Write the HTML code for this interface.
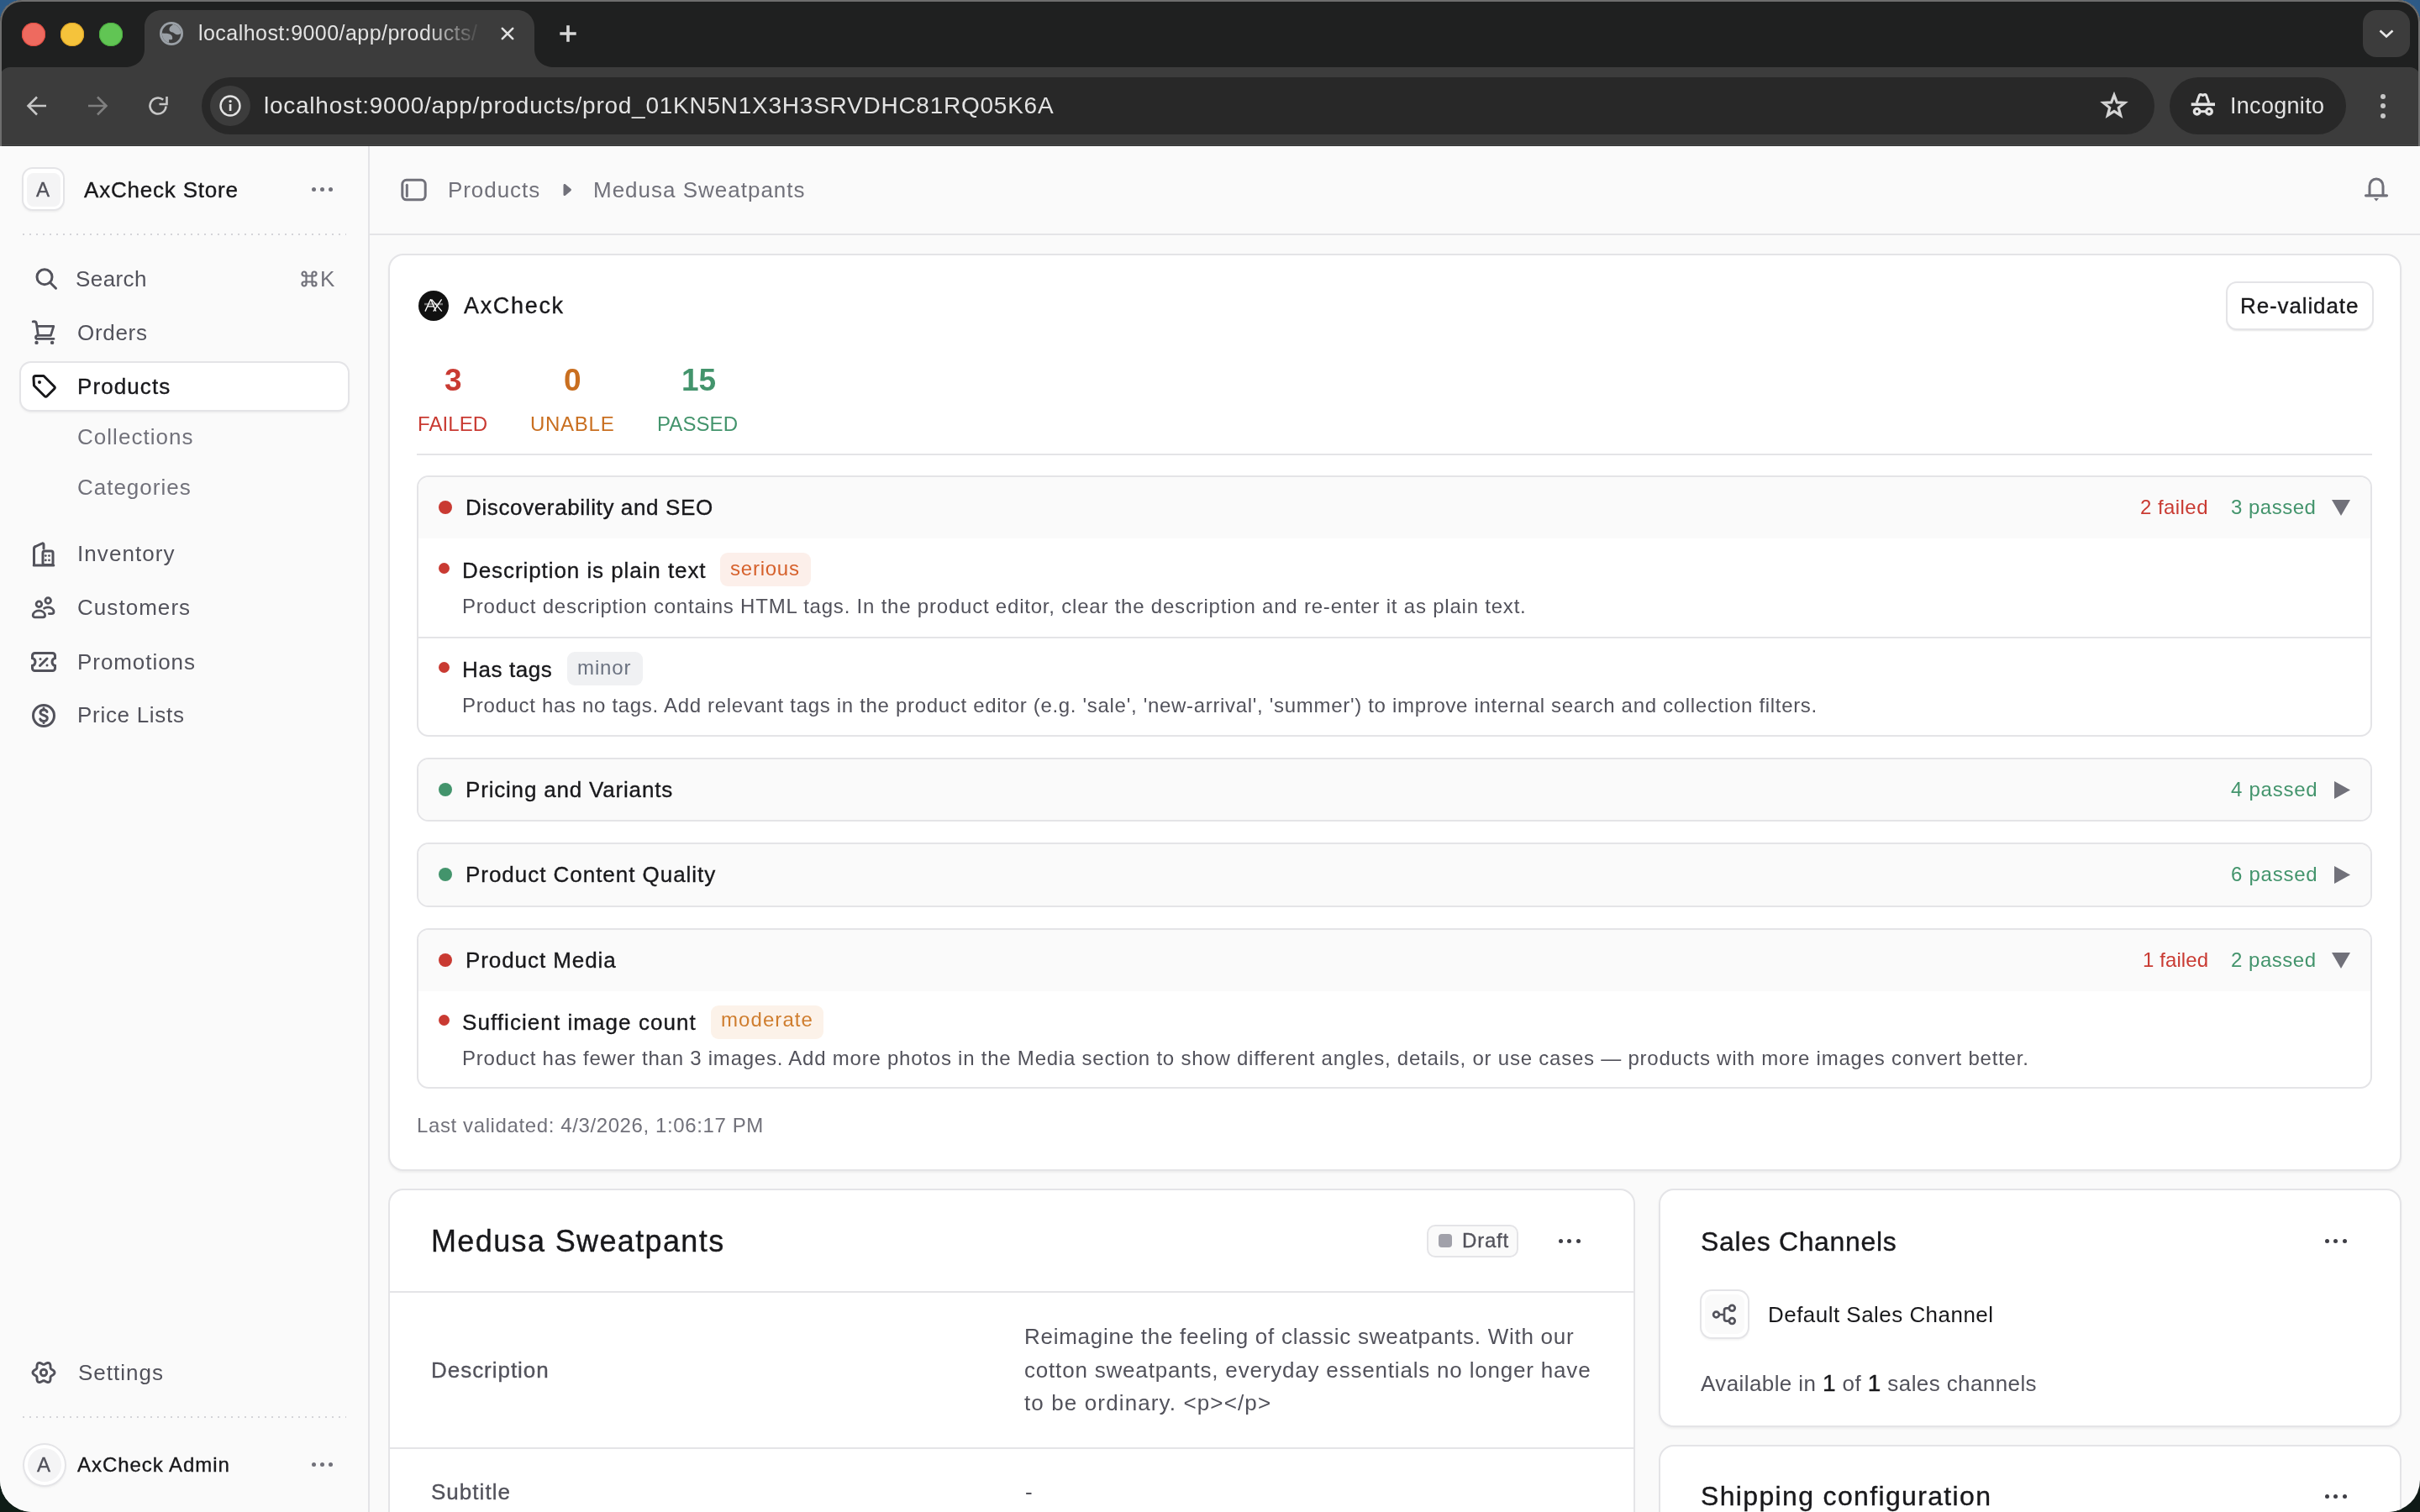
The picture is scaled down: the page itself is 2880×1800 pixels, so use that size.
<!DOCTYPE html><html><head><meta charset="utf-8"><style>
html,body{margin:0;padding:0;width:2880px;height:1800px;overflow:hidden;background:#10201a;}
body{position:relative;font-family:"Liberation Sans",sans-serif;}
.t{position:absolute;white-space:pre;line-height:1;will-change:transform;}
svg{overflow:visible;position:absolute}
</style></head><body>
<div style="position:absolute;left:0px;top:0px;width:80px;height:80px;background:#2d5a86;"></div>
<div style="position:absolute;left:2800px;top:0px;width:80px;height:80px;background:#2d5a86;"></div>
<div style="position:absolute;left:0px;top:1720px;width:80px;height:80px;background:#0f1d17;"></div>
<div style="position:absolute;left:2800px;top:1720px;width:80px;height:80px;background:#0f1a16;"></div>
<div style="position:absolute;left:0;top:0;width:2880px;height:1800px;border-radius:26px 26px 38px 38px;overflow:hidden;background:#fafafa;">
<div style="position:absolute;left:0px;top:0px;width:2880px;height:174px;background:#1f2020;"></div>
<div style="position:absolute;left:0px;top:80px;width:2880px;height:94px;background:#3c3c3c;border-radius:12px 12px 0 0;"></div>
<div style="position:absolute;left:0px;top:0px;width:2px;height:174px;background:#4a4a4a;"></div>
<div style="position:absolute;left:0px;top:90px;width:2px;height:84px;background:#686868;"></div>
<div style="position:absolute;left:2878px;top:0px;width:2px;height:174px;background:#4a4a4a;"></div>
<div style="position:absolute;left:2878px;top:90px;width:2px;height:84px;background:#686868;"></div>
<div style="position:absolute;left:0px;top:172px;width:2880px;height:1px;background:#464646;"></div>
<div style="position:absolute;left:0px;top:173px;width:2880px;height:1px;background:#333434;"></div>
<div style="position:absolute;left:0;top:0;width:2876px;height:172px;border:2px solid #6e6e6e;border-bottom:none;border-radius:26px 26px 0 0;"></div>
<svg style="position:absolute;left:148px;top:12px;" width="512" height="68" viewBox="0 0 512 68"><path d="M0 68 C14 68 24 60 24 46 L24 20 C24 9 33 0 44 0 L468 0 C479 0 488 9 488 20 L488 46 C488 60 498 68 512 68 Z" fill="#3c3c3c"/></svg>
<div style="position:absolute;left:26px;top:27px;width:28px;height:28px;border-radius:50%;background:#ee6a5f;box-shadow:inset 0 0 0 1px #e24b41;"></div>
<div style="position:absolute;left:72px;top:27px;width:28px;height:28px;border-radius:50%;background:#f5c33b;box-shadow:inset 0 0 0 1px #dea425;"></div>
<div style="position:absolute;left:118px;top:27px;width:28px;height:28px;border-radius:50%;background:#61c554;box-shadow:inset 0 0 0 1px #4cae40;"></div>
<svg style="position:absolute;left:190px;top:26px;" width="28" height="28" viewBox="0 0 28 28"><defs><clipPath id="gc"><circle cx="14" cy="14" r="11.2"/></clipPath></defs><circle cx="14" cy="14" r="14" fill="#9aa0a6"/><circle cx="14" cy="14" r="11.2" fill="#3c3c3c"/><g clip-path="url(#gc)" fill="#9aa0a6"><path d="M15.7 0 L15.7 3.4 C13 5 11.4 6.5 11.4 9 C11.4 11.5 13.5 12.3 15.7 12.6 C17.5 13.5 18 15 20.5 15.2 C22.5 15.2 24 14.5 25 13.9 L30 13.9 L30 0 Z"/><path d="M0 13.6 L3.1 13.6 C7 13.8 10.5 13.9 12.5 14.8 C14.5 15.8 15.2 17.5 15.2 19.5 C15.2 21 14.5 21.2 13 21.2 L11 21.2 L11.2 24.1 L11.2 30 L0 30 Z"/></g></svg>
<div style="position:absolute;left:230px;top:20px;width:345px;height:40px;overflow:hidden;-webkit-mask-image:linear-gradient(90deg,#000 80%,transparent 100%);"><div style="position:absolute;left:-230px;top:-20px;width:2880px;height:100px;">
<div class="t" style="left:236.00px;top:26.84px;font-size:25px;color:#e3e3e3;letter-spacing:0.454px;">localhost:9000/app/products/</div>
</div></div>
<svg style="position:absolute;left:596px;top:32px;" width="16" height="16" viewBox="0 0 16 16"><path d="M1.8 1.8 L14.2 14.2 M14.2 1.8 L1.8 14.2" stroke="#e3e3e3" stroke-width="2.6" stroke-linecap="round"/></svg>
<svg style="position:absolute;left:666px;top:30px;" width="20" height="20" viewBox="0 0 20 20"><path d="M10 0.3 V19.7 M0.3 10 H19.7" stroke="#d8d8d8" stroke-width="3.6"/></svg>
<div style="position:absolute;left:2812px;top:12px;width:56px;height:56px;border-radius:16px;background:#3c3c3c;"></div>
<svg style="position:absolute;left:2831px;top:35px;" width="18" height="10" viewBox="0 0 18 10"><path d="M1.5 1.5 L9 8.5 L16.5 1.5" stroke="#e8e8e8" stroke-width="2.6" fill="none"/></svg>
<svg style="position:absolute;left:32px;top:114px;" width="24" height="24" viewBox="0 0 24 24"><path d="M23 12 H2.5 M12 1.5 L1.5 12 L12 22.5" stroke="#c7c7c7" stroke-width="2.6" fill="none"/></svg>
<svg style="position:absolute;left:104px;top:114px;" width="24" height="24" viewBox="0 0 24 24"><path d="M1 12 H21.5 M12 1.5 L22.5 12 L12 22.5" stroke="#7f7f7f" stroke-width="2.6" fill="none"/></svg>
<svg style="position:absolute;left:176px;top:114px;" width="24" height="24" viewBox="0 0 24 24"><path d="M21.5 12.5 A9.5 9.5 0 1 1 18.2 4.8" stroke="#c7c7c7" stroke-width="2.6" fill="none"/><path d="M22.5 1 V10 H13.5" stroke="#c7c7c7" stroke-width="2.6" fill="none"/></svg>
<div style="position:absolute;left:240px;top:92px;width:2324px;height:68px;border-radius:34px;background:#282828;"></div>
<div style="position:absolute;left:250px;top:102px;width:48px;height:48px;border-radius:50%;background:#3c3c3c;"></div>
<svg style="position:absolute;left:261px;top:113px;" width="26" height="26" viewBox="0 0 26 26"><circle cx="13" cy="13" r="11.5" stroke="#e3e3e3" stroke-width="2.4" fill="none"/><rect x="11.8" y="11" width="2.6" height="8" fill="#e3e3e3"/><circle cx="13.1" cy="7.6" r="1.7" fill="#e3e3e3"/></svg>
<div class="t" style="left:314.00px;top:112.30px;font-size:28px;color:#e3e3e3;letter-spacing:0.751px;">localhost:9000/app/products/prod_01KN5N1X3H3SRVDHC81RQ05K6A</div>
<svg style="position:absolute;left:2500px;top:110px;" width="32" height="31" viewBox="0 0 32 31"><path d="M16 3.2 L19.3 11.9 L28.6 12.4 L21.3 18.3 L23.7 27.4 L16 22.3 L8.3 27.4 L10.7 18.3 L3.4 12.4 L12.7 11.9 Z" stroke="#d4d4d4" stroke-width="3.2" fill="none" stroke-linejoin="miter"/></svg>
<div style="position:absolute;left:2582px;top:92px;width:210px;height:68px;border-radius:34px;background:#282828;"></div>
<svg style="position:absolute;left:2607px;top:111px;" width="29" height="28" viewBox="0 0 29 28"><path d="M7.2 11.5 L10.3 2.8 C10.7 1.7 11.6 1.3 12.6 1.7 L14.5 2.5 L16.4 1.7 C17.4 1.3 18.3 1.7 18.7 2.8 L21.8 11.5" stroke="#e3e3e3" stroke-width="3" fill="none" stroke-linejoin="round"/><rect x="0.7" y="11.4" width="28.3" height="3.7" fill="#e3e3e3"/><circle cx="7.6" cy="21.7" r="3.3" stroke="#e3e3e3" stroke-width="3.3" fill="none"/><circle cx="22" cy="21.7" r="3.3" stroke="#e3e3e3" stroke-width="3.3" fill="none"/><path d="M10.5 21.7 H19" stroke="#e3e3e3" stroke-width="3"/></svg>
<div class="t" style="left:2654.00px;top:113.14px;font-size:27px;color:#e3e3e3;letter-spacing:0.297px;">Incognito</div>
<div style="position:absolute;left:2833px;top:111.5px;width:6px;height:6px;border-radius:50%;background:#c7c7c7;"></div>
<div style="position:absolute;left:2833px;top:123px;width:6px;height:6px;border-radius:50%;background:#c7c7c7;"></div>
<div style="position:absolute;left:2833px;top:134.5px;width:6px;height:6px;border-radius:50%;background:#c7c7c7;"></div>
<div style="position:absolute;left:0px;top:174px;width:438px;height:1626px;background:#fafafa;"></div>
<div style="position:absolute;left:438px;top:174px;width:2px;height:1626px;background:#e4e4e7;"></div>
<div style="position:absolute;left:28px;top:201px;width:47px;height:48px;border-radius:11px;background:#fff;box-shadow:0 0 0 2px #e4e4e7,0 2px 3px 1px rgba(0,0,0,0.07);"></div>
<div style="position:absolute;left:32px;top:206px;width:40px;height:40px;border-radius:8px;background:#f4f4f5;"></div>
<div class="t" style="left:43.20px;top:213.88px;font-size:24px;color:#52525b;-webkit-text-stroke:0.35px currentColor;">A</div>
<div class="t" style="left:100.00px;top:212.99px;font-size:26px;color:#18181b;letter-spacing:0.798px;-webkit-text-stroke:0.35px currentColor;">AxCheck Store</div>
<div style="position:absolute;left:370.5px;top:223px;width:5px;height:5px;border-radius:50%;background:#71717a;"></div>
<div style="position:absolute;left:380.5px;top:223px;width:5px;height:5px;border-radius:50%;background:#71717a;"></div>
<div style="position:absolute;left:390.5px;top:223px;width:5px;height:5px;border-radius:50%;background:#71717a;"></div>
<div style="position:absolute;left:24px;top:278px;width:388px;height:2px;background-image:radial-gradient(circle,#d4d4d8 0.9px,transparent 1.1px);background-size:8px 2px;"></div>
<svg style="position:absolute;left:40px;top:317px;" width="30" height="30" viewBox="0 0 30 30"><circle cx="13" cy="12.7" r="9" stroke="#52525b" stroke-width="3" fill="none"/><path d="M20 19.7 L26.5 26.2" stroke="#52525b" stroke-width="3" stroke-linecap="round"/></svg>
<div class="t" style="left:90.20px;top:318.99px;font-size:26px;color:#52525b;letter-spacing:0.416px;">Search</div>
<svg style="position:absolute;left:358px;top:322px;" width="20" height="20" viewBox="0 0 20 20"><path d="M6.5 6.5 H13.5 V13.5 H6.5 Z M6.5 6.5 V4 A2.5 2.5 0 1 0 4 6.5 H6.5 M13.5 6.5 V4 A2.5 2.5 0 1 1 16 6.5 H13.5 M6.5 13.5 V16 A2.5 2.5 0 1 1 4 13.5 H6.5 M13.5 13.5 V16 A2.5 2.5 0 1 0 16 13.5 H13.5" stroke="#71717a" stroke-width="2.2" fill="none"/></svg>
<div class="t" style="left:381.00px;top:318.99px;font-size:26px;color:#71717a;">K</div>
<svg style="position:absolute;left:37px;top:380px;" width="30" height="30" viewBox="0 0 30 30"><path d="M2.2 2.9 C4.5 2.5 6 3.2 6.4 5 L8.4 19.3 H23.4 L26.8 8.4 H7.4 M8.4 19.3 C6.5 19.3 5.5 20.3 5.5 21.4 C5.5 22.7 6.5 23.4 7.8 23.4 H27" stroke="#52525b" stroke-width="2.8" fill="none" stroke-linecap="round" stroke-linejoin="round"/><circle cx="6.5" cy="27.9" r="2.2" fill="#52525b"/><circle cx="25.1" cy="27.9" r="2.2" fill="#52525b"/></svg>
<div class="t" style="left:91.80px;top:382.99px;font-size:26px;color:#52525b;letter-spacing:0.694px;">Orders</div>
<div style="position:absolute;left:25px;top:432px;width:389px;height:56px;border-radius:12px;background:#fff;box-shadow:0 0 0 2px #e4e4e7,0 2px 3px 1px rgba(0,0,0,0.07);"></div>
<svg style="position:absolute;left:37px;top:445px;" width="30" height="30" viewBox="0 0 30 30"><path d="M3 5 C3 3.5 4 2.5 5.5 2.5 H15 L27.5 15 C28.5 16 28.5 17 27.5 18 L19 26.5 C18 27.5 17 27.5 16 26.5 L3.5 14 Z" stroke="#18181b" stroke-width="3" fill="none" stroke-linejoin="round"/><circle cx="10" cy="10" r="2" fill="#18181b"/></svg>
<div class="t" style="left:91.80px;top:446.99px;font-size:26px;color:#18181b;letter-spacing:1.090px;-webkit-text-stroke:0.35px currentColor;">Products</div>
<div class="t" style="left:91.80px;top:506.99px;font-size:26px;color:#71717a;letter-spacing:1.036px;">Collections</div>
<div class="t" style="left:91.80px;top:566.99px;font-size:26px;color:#71717a;letter-spacing:0.988px;">Categories</div>
<svg style="position:absolute;left:37px;top:644px;" width="30" height="31" viewBox="0 0 30 31"><path d="M3.5 28.5 V9 C3.5 7.5 4 7 5.5 6.5 L13 3 C14 2.5 15 3 15 4.5 V9" stroke="#52525b" stroke-width="3" fill="none" stroke-linejoin="round" stroke-linecap="round"/><rect x="14" y="12" width="12" height="16.5" rx="2" stroke="#52525b" stroke-width="3" fill="none"/><path d="M3.2 29 H26.8" stroke="#52525b" stroke-width="3" stroke-linecap="round"/><circle cx="17.3" cy="17.6" r="1.4" fill="#52525b"/><circle cx="21.5" cy="17.6" r="1.4" fill="#52525b"/><circle cx="17.3" cy="22.9" r="1.4" fill="#52525b"/><circle cx="21.5" cy="22.9" r="1.4" fill="#52525b"/></svg>
<div class="t" style="left:91.80px;top:646.39px;font-size:26px;color:#52525b;letter-spacing:1.076px;">Inventory</div>
<svg style="position:absolute;left:37px;top:709px;" width="30" height="28" viewBox="0 0 30 28"><circle cx="9.4" cy="10.2" r="3.3" stroke="#52525b" stroke-width="2.8" fill="none"/><circle cx="20.2" cy="6" r="3.3" stroke="#52525b" stroke-width="2.8" fill="none"/><path d="M2.2 23.6 C2.2 20.3 5.5 17.9 9.4 17.9 C13.3 17.9 16.6 20.3 16.6 23.6 C16.6 25 15.6 25.8 14.2 25.8 H4.6 C3.2 25.8 2.2 25 2.2 23.6 Z" stroke="#52525b" stroke-width="2.8" fill="none"/><path d="M15.6 15.2 C16.9 14.3 18.4 13.9 20.2 13.9 C24 13.9 27 16.4 27 19.2 C27 20.8 26 21.6 24.6 21.6 H21.3" stroke="#52525b" stroke-width="2.8" fill="none" stroke-linecap="round"/></svg>
<div class="t" style="left:91.80px;top:710.39px;font-size:26px;color:#52525b;letter-spacing:1.049px;">Customers</div>
<svg style="position:absolute;left:37px;top:776px;" width="30" height="24" viewBox="0 0 30 24"><path d="M4.5 1.5 H25.5 C27.2 1.5 28.5 2.8 28.5 4.5 V7.5 C26.5 7.8 25 9.8 25 12 C25 14.2 26.5 16.2 28.5 16.5 V19.5 C28.5 21.2 27.2 22.5 25.5 22.5 H4.5 C2.8 22.5 1.5 21.2 1.5 19.5 V16.5 C3.5 16.2 5 14.2 5 12 C5 9.8 3.5 7.8 1.5 7.5 V4.5 C1.5 2.8 2.8 1.5 4.5 1.5 Z" stroke="#52525b" stroke-width="3" fill="none"/><path d="M10.5 16.5 L19 8" stroke="#52525b" stroke-width="3" stroke-linecap="round"/><circle cx="11" cy="8.5" r="1.5" fill="#52525b"/><circle cx="19" cy="16" r="1.5" fill="#52525b"/></svg>
<div class="t" style="left:91.80px;top:774.89px;font-size:26px;color:#52525b;letter-spacing:0.938px;">Promotions</div>
<svg style="position:absolute;left:37px;top:837px;" width="30" height="30" viewBox="0 0 30 30"><circle cx="15" cy="15" r="12.5" stroke="#52525b" stroke-width="3" fill="none"/><path d="M19 10.5 C18.5 9 17 8 15 8 C12.5 8 11 9.5 11 11.3 C11 15.5 19.3 13.5 19.3 18 C19.3 20 17.5 21.5 15 21.5 C13 21.5 11.3 20.5 10.8 19 M15 6 V8 M15 21.5 V23.5" stroke="#52525b" stroke-width="3" fill="none" stroke-linecap="round"/></svg>
<div class="t" style="left:91.80px;top:838.49px;font-size:26px;color:#52525b;letter-spacing:0.704px;">Price Lists</div>
<svg style="position:absolute;left:37px;top:1619px;" width="30" height="30" viewBox="0 0 30 30"><path d="M28.00 15.00 L27.90 15.68 L27.61 16.32 L27.15 16.92 L26.57 17.46 L25.91 17.92 L25.25 18.33 L24.62 18.69 L24.07 19.04 L23.63 19.40 L23.31 19.80 L23.12 20.27 L23.03 20.83 L23.01 21.48 L23.01 22.21 L22.99 22.99 L22.91 23.79 L22.74 24.56 L22.45 25.25 L22.03 25.83 L21.50 26.26 L20.86 26.51 L20.16 26.58 L19.41 26.48 L18.65 26.25 L17.92 25.91 L17.24 25.54 L16.61 25.17 L16.04 24.87 L15.51 24.67 L15.00 24.60 L14.49 24.67 L13.96 24.87 L13.39 25.17 L12.76 25.54 L12.08 25.91 L11.35 26.25 L10.59 26.48 L9.84 26.58 L9.14 26.51 L8.50 26.26 L7.97 25.83 L7.55 25.25 L7.26 24.56 L7.09 23.79 L7.01 22.99 L6.99 22.21 L6.99 21.48 L6.97 20.83 L6.88 20.27 L6.69 19.80 L6.37 19.40 L5.93 19.04 L5.38 18.69 L4.75 18.33 L4.09 17.92 L3.43 17.46 L2.85 16.92 L2.39 16.32 L2.10 15.68 L2.00 15.00 L2.10 14.32 L2.39 13.68 L2.85 13.08 L3.43 12.54 L4.09 12.08 L4.75 11.67 L5.38 11.31 L5.93 10.96 L6.37 10.60 L6.69 10.20 L6.88 9.73 L6.97 9.17 L6.99 8.52 L6.99 7.79 L7.01 7.01 L7.09 6.21 L7.26 5.44 L7.55 4.75 L7.97 4.17 L8.50 3.74 L9.14 3.49 L9.84 3.42 L10.59 3.52 L11.35 3.75 L12.08 4.09 L12.76 4.46 L13.39 4.83 L13.96 5.13 L14.49 5.33 L15.00 5.40 L15.51 5.33 L16.04 5.13 L16.61 4.83 L17.24 4.46 L17.92 4.09 L18.65 3.75 L19.41 3.52 L20.16 3.42 L20.86 3.49 L21.50 3.74 L22.03 4.17 L22.45 4.75 L22.74 5.44 L22.91 6.21 L22.99 7.01 L23.01 7.79 L23.01 8.52 L23.03 9.17 L23.12 9.73 L23.31 10.20 L23.63 10.60 L24.07 10.96 L24.62 11.31 L25.25 11.67 L25.91 12.08 L26.57 12.54 L27.15 13.08 L27.61 13.68 L27.90 14.32 Z" stroke="#52525b" stroke-width="2.9" fill="none" stroke-linejoin="round"/><circle cx="15" cy="15" r="3.7" stroke="#52525b" stroke-width="2.9" fill="none"/></svg>
<div class="t" style="left:92.50px;top:1621.19px;font-size:26px;color:#52525b;letter-spacing:1.016px;">Settings</div>
<div style="position:absolute;left:24px;top:1686px;width:388px;height:2px;background-image:radial-gradient(circle,#d4d4d8 0.9px,transparent 1.1px);background-size:8px 2px;"></div>
<div style="position:absolute;left:28.5px;top:1719.5px;width:48px;height:48px;border-radius:50%;background:#fff;box-shadow:0 0 0 2px #e4e4e7,0 2px 3px 1px rgba(0,0,0,0.07);"></div>
<div style="position:absolute;left:32.5px;top:1723.5px;width:40px;height:40px;border-radius:50%;background:#f4f4f5;"></div>
<div class="t" style="left:43.50px;top:1731.68px;font-size:24px;color:#52525b;-webkit-text-stroke:0.35px currentColor;">A</div>
<div class="t" style="left:91.70px;top:1731.68px;font-size:24px;color:#18181b;letter-spacing:0.955px;-webkit-text-stroke:0.35px currentColor;">AxCheck Admin</div>
<div style="position:absolute;left:370.5px;top:1741px;width:5px;height:5px;border-radius:50%;background:#71717a;"></div>
<div style="position:absolute;left:380.5px;top:1741px;width:5px;height:5px;border-radius:50%;background:#71717a;"></div>
<div style="position:absolute;left:390.5px;top:1741px;width:5px;height:5px;border-radius:50%;background:#71717a;"></div>
<div style="position:absolute;left:440px;top:278px;width:2440px;height:2px;background:#e4e4e7;"></div>
<svg style="position:absolute;left:476px;top:212px;" width="32" height="28" viewBox="0 0 32 28"><rect x="2.8" y="2.3" width="27.4" height="23.5" rx="5" stroke="#71717a" stroke-width="3" fill="none"/><path d="M8.3 8.3 V21.5" stroke="#71717a" stroke-width="3" stroke-linecap="round"/></svg>
<div class="t" style="left:532.60px;top:212.99px;font-size:26px;color:#71717a;letter-spacing:0.933px;">Products</div>
<svg style="position:absolute;left:669px;top:218px;" width="12" height="16" viewBox="0 0 12 16"><path d="M1.5 2.5 C1.5 1 2.8 0.5 3.8 1.3 L10.3 6.8 C11.2 7.5 11.2 8.5 10.3 9.2 L3.8 14.7 C2.8 15.5 1.5 15 1.5 13.5 Z" fill="#71717a"/></svg>
<div class="t" style="left:705.50px;top:212.99px;font-size:26px;color:#71717a;letter-spacing:0.996px;">Medusa Sweatpants</div>
<svg style="position:absolute;left:2814px;top:211px;" width="28" height="30" viewBox="0 0 28 30"><path d="M6 21.5 V10.5 C6 5.5 9.5 2 14 2 C18.5 2 22 5.5 22 10.5 V21.5" stroke="#71717a" stroke-width="3" fill="none"/><path d="M1.5 21.8 H26.5" stroke="#71717a" stroke-width="3.2" stroke-linecap="round"/><path d="M11 25 H17 L14 28.5 Z" fill="#71717a"/></svg>
<div style="position:absolute;left:462px;top:302px;width:2396px;height:1092px;box-sizing:border-box;border:2px solid #e4e4e7;border-radius:18px;background:#fff;box-shadow:0 2px 3px rgba(0,0,0,0.05);"></div>
<div style="position:absolute;left:498px;top:346px;width:36px;height:36px;border-radius:50%;background:#111;"></div>
<svg style="position:absolute;left:498px;top:346px;" width="36" height="36" viewBox="0 0 36 36"><rect x="7" y="14.8" width="22" height="2.5" fill="#707070"/><path d="M8 24.6 L14.6 10.2 L20.8 24.4 M10.9 18.8 H17.8 M15.8 10.6 L27.8 24.6 M27.6 10.4 L17.8 24.6" stroke="#fff" stroke-width="1.35" fill="none" stroke-linejoin="bevel"/></svg>
<div class="t" style="left:552.30px;top:350.84px;font-size:27px;color:#18181b;letter-spacing:1.677px;-webkit-text-stroke:0.35px currentColor;">AxCheck</div>
<div style="position:absolute;left:2651px;top:336.5px;width:172px;height:54px;border-radius:11px;background:#fff;box-shadow:0 0 0 2px #e4e4e7,0 2px 2px 1px rgba(0,0,0,0.10);"></div>
<div class="t" style="left:2666.00px;top:350.99px;font-size:26px;color:#18181b;letter-spacing:0.884px;-webkit-text-stroke:0.35px currentColor;">Re-validate</div>
<div class="t" style="left:528.50px;top:434.28px;font-size:37px;color:#c93a32;font-weight:700;">3</div>
<div class="t" style="left:670.50px;top:434.28px;font-size:37px;color:#c96f20;font-weight:700;">0</div>
<div class="t" style="left:811.00px;top:434.28px;font-size:37px;color:#43946c;font-weight:700;">15</div>
<div class="t" style="left:496.50px;top:492.78px;font-size:24px;color:#c93a32;letter-spacing:0.084px;">FAILED</div>
<div class="t" style="left:630.80px;top:492.78px;font-size:24px;color:#c96f20;letter-spacing:0.720px;">UNABLE</div>
<div class="t" style="left:781.60px;top:492.78px;font-size:24px;color:#43946c;letter-spacing:0.092px;">PASSED</div>
<div style="position:absolute;left:496px;top:540px;width:2327px;height:2px;background:#e4e4e7;"></div>
<div style="position:absolute;left:496px;top:566px;width:2327px;height:311px;box-sizing:border-box;border:2px solid #e4e4e7;border-radius:14px;background:#fff;overflow:hidden;">
<div style="position:absolute;left:0;top:0;width:100%;height:73px;background:#fafafa;"></div>
</div>
<div style="position:absolute;left:522px;top:596px;width:16px;height:16px;border-radius:50%;background:#c93a32;"></div>
<div class="t" style="left:553.80px;top:590.99px;font-size:26px;color:#18181b;letter-spacing:0.627px;-webkit-text-stroke:0.35px currentColor;">Discoverability and SEO</div>
<div class="t" style="left:2546.80px;top:592.18px;font-size:24px;color:#c93a32;letter-spacing:0.443px;">2 failed</div>
<div class="t" style="left:2654.50px;top:592.18px;font-size:24px;color:#43946c;letter-spacing:0.494px;">3 passed</div>
<svg style="position:absolute;left:2775px;top:595px;" width="22" height="19" viewBox="0 0 22 19"><path d="M0 0 H22 L11 19 Z" fill="#71717a"/></svg>
<div style="position:absolute;left:496px;top:902px;width:2327px;height:76px;box-sizing:border-box;border:2px solid #e4e4e7;border-radius:14px;background:#fff;overflow:hidden;">
<div style="position:absolute;left:0;top:0;width:100%;height:73px;background:#fafafa;"></div>
</div>
<div style="position:absolute;left:522px;top:932px;width:16px;height:16px;border-radius:50%;background:#43946c;"></div>
<div class="t" style="left:553.80px;top:926.99px;font-size:26px;color:#18181b;letter-spacing:0.813px;-webkit-text-stroke:0.35px currentColor;">Pricing and Variants</div>
<div class="t" style="left:2655.30px;top:928.18px;font-size:24px;color:#43946c;letter-spacing:0.751px;">4 passed</div>
<svg style="position:absolute;left:2778px;top:930px;" width="19" height="21" viewBox="0 0 19 21"><path d="M0 0 V21 L19 10.5 Z" fill="#71717a"/></svg>
<div style="position:absolute;left:496px;top:1003px;width:2327px;height:77px;box-sizing:border-box;border:2px solid #e4e4e7;border-radius:14px;background:#fff;overflow:hidden;">
<div style="position:absolute;left:0;top:0;width:100%;height:73px;background:#fafafa;"></div>
</div>
<div style="position:absolute;left:522px;top:1033px;width:16px;height:16px;border-radius:50%;background:#43946c;"></div>
<div class="t" style="left:553.80px;top:1027.99px;font-size:26px;color:#18181b;letter-spacing:0.964px;-webkit-text-stroke:0.35px currentColor;">Product Content Quality</div>
<div class="t" style="left:2655.30px;top:1029.18px;font-size:24px;color:#43946c;letter-spacing:0.751px;">6 passed</div>
<svg style="position:absolute;left:2778px;top:1031px;" width="19" height="21" viewBox="0 0 19 21"><path d="M0 0 V21 L19 10.5 Z" fill="#71717a"/></svg>
<div style="position:absolute;left:496px;top:1105px;width:2327px;height:191px;box-sizing:border-box;border:2px solid #e4e4e7;border-radius:14px;background:#fff;overflow:hidden;">
<div style="position:absolute;left:0;top:0;width:100%;height:73px;background:#fafafa;"></div>
</div>
<div style="position:absolute;left:522px;top:1135px;width:16px;height:16px;border-radius:50%;background:#c93a32;"></div>
<div class="t" style="left:553.80px;top:1129.99px;font-size:26px;color:#18181b;letter-spacing:0.925px;-webkit-text-stroke:0.35px currentColor;">Product Media</div>
<div class="t" style="left:2550.30px;top:1131.18px;font-size:24px;color:#c93a32;letter-spacing:0.100px;">1 failed</div>
<div class="t" style="left:2654.70px;top:1131.18px;font-size:24px;color:#43946c;letter-spacing:0.523px;">2 passed</div>
<svg style="position:absolute;left:2775px;top:1134px;" width="22" height="19" viewBox="0 0 22 19"><path d="M0 0 H22 L11 19 Z" fill="#71717a"/></svg>
<div style="position:absolute;left:498px;top:758px;width:2323px;height:2px;background:#e4e4e7;"></div>
<div style="position:absolute;left:522px;top:669.5px;width:13px;height:13px;border-radius:50%;background:#c93a32;"></div>
<div class="t" style="left:550.20px;top:666.39px;font-size:26px;color:#18181b;letter-spacing:0.926px;-webkit-text-stroke:0.35px currentColor;">Description is plain text</div>
<div style="position:absolute;left:857px;top:658px;width:108px;height:40px;border-radius:9px;background:#fcefea;"></div>
<div class="t" style="left:869.00px;top:665.08px;font-size:24px;color:#d6612c;letter-spacing:0.767px;">serious</div>
<div class="t" style="left:550.20px;top:709.68px;font-size:24px;color:#52525b;letter-spacing:0.790px;">Product description contains HTML tags. In the product editor, clear the description and re-enter it as plain text.</div>
<div style="position:absolute;left:522px;top:787.5px;width:13px;height:13px;border-radius:50%;background:#c93a32;"></div>
<div class="t" style="left:550.20px;top:783.99px;font-size:26px;color:#18181b;letter-spacing:0.604px;-webkit-text-stroke:0.35px currentColor;">Has tags</div>
<div style="position:absolute;left:675px;top:776px;width:90px;height:40px;border-radius:9px;background:#f0f1f3;"></div>
<div class="t" style="left:687.00px;top:782.68px;font-size:24px;color:#6b7280;letter-spacing:0.900px;">minor</div>
<div class="t" style="left:550.20px;top:827.68px;font-size:24px;color:#52525b;letter-spacing:0.689px;">Product has no tags. Add relevant tags in the product editor (e.g. 'sale', 'new-arrival', 'summer') to improve internal search and collection filters.</div>
<div style="position:absolute;left:522px;top:1207.5px;width:13px;height:13px;border-radius:50%;background:#c93a32;"></div>
<div class="t" style="left:550.20px;top:1203.79px;font-size:26px;color:#18181b;letter-spacing:1.070px;-webkit-text-stroke:0.35px currentColor;">Sufficient image count</div>
<div style="position:absolute;left:846px;top:1197px;width:134px;height:40px;border-radius:9px;background:#fcf2e9;"></div>
<div class="t" style="left:857.70px;top:1202.48px;font-size:24px;color:#cf7d2e;letter-spacing:1.071px;">moderate</div>
<div class="t" style="left:550.20px;top:1248.28px;font-size:24px;color:#52525b;letter-spacing:0.771px;">Product has fewer than 3 images. Add more photos in the Media section to show different angles, details, or use cases — products with more images convert better.</div>
<div class="t" style="left:495.70px;top:1328.48px;font-size:24px;color:#71717a;letter-spacing:0.610px;">Last validated: 4/3/2026, 1:06:17 PM</div>
<div style="position:absolute;left:462px;top:1415px;width:1484px;height:500px;box-sizing:border-box;border:2px solid #e4e4e7;border-radius:18px;background:#fff;"></div>
<div class="t" style="left:512.60px;top:1460.13px;font-size:36px;color:#18181b;letter-spacing:1.371px;-webkit-text-stroke:0.35px currentColor;">Medusa Sweatpants</div>
<div style="position:absolute;left:1698px;top:1458px;width:109px;height:39px;box-sizing:border-box;border:2px solid #e4e4e7;border-radius:10px;background:#fafafa;"></div>
<div style="position:absolute;left:1712px;top:1469px;width:16px;height:16px;border-radius:4px;background:#a1a1aa;"></div>
<div class="t" style="left:1740.30px;top:1464.68px;font-size:24px;color:#52525b;letter-spacing:0.810px;-webkit-text-stroke:0.35px currentColor;">Draft</div>
<div style="position:absolute;left:1854.5px;top:1474.5px;width:5px;height:5px;border-radius:50%;background:#3f3f46;"></div>
<div style="position:absolute;left:1865.0px;top:1474.5px;width:5px;height:5px;border-radius:50%;background:#3f3f46;"></div>
<div style="position:absolute;left:1875.5px;top:1474.5px;width:5px;height:5px;border-radius:50%;background:#3f3f46;"></div>
<div style="position:absolute;left:464px;top:1537px;width:1480px;height:2px;background:#e4e4e7;"></div>
<div class="t" style="left:512.60px;top:1617.99px;font-size:26px;color:#52525b;letter-spacing:0.970px;-webkit-text-stroke:0.35px currentColor;">Description</div>
<div class="t" style="left:1219.30px;top:1577.99px;font-size:26px;color:#52525b;letter-spacing:0.731px;">Reimagine the feeling of classic sweatpants. With our</div>
<div class="t" style="left:1219.30px;top:1617.69px;font-size:26px;color:#52525b;letter-spacing:0.808px;">cotton sweatpants, everyday essentials no longer have</div>
<div class="t" style="left:1219.30px;top:1657.29px;font-size:26px;color:#52525b;letter-spacing:1.122px;">to be ordinary. &lt;p&gt;&lt;/p&gt;</div>
<div style="position:absolute;left:464px;top:1723px;width:1480px;height:2px;background:#e4e4e7;"></div>
<div class="t" style="left:512.60px;top:1763.49px;font-size:26px;color:#52525b;letter-spacing:1.027px;-webkit-text-stroke:0.35px currentColor;">Subtitle</div>
<div class="t" style="left:1220.00px;top:1763.49px;font-size:26px;color:#52525b;">-</div>
<div style="position:absolute;left:1974px;top:1415px;width:884px;height:284px;box-sizing:border-box;border:2px solid #e4e4e7;border-radius:18px;background:#fff;box-shadow:0 2px 3px rgba(0,0,0,0.05);"></div>
<div class="t" style="left:2023.60px;top:1461.51px;font-size:32px;color:#18181b;letter-spacing:0.657px;-webkit-text-stroke:0.35px currentColor;">Sales Channels</div>
<div style="position:absolute;left:2766.5px;top:1474.5px;width:5px;height:5px;border-radius:50%;background:#3f3f46;"></div>
<div style="position:absolute;left:2777.0px;top:1474.5px;width:5px;height:5px;border-radius:50%;background:#3f3f46;"></div>
<div style="position:absolute;left:2787.5px;top:1474.5px;width:5px;height:5px;border-radius:50%;background:#3f3f46;"></div>
<div style="position:absolute;left:2025px;top:1537px;width:55px;height:55px;border-radius:12px;background:#fff;box-shadow:0 0 0 2px #e4e4e7,0 2px 3px 1px rgba(0,0,0,0.07);"></div>
<div style="position:absolute;left:2029px;top:1541px;width:47px;height:47px;border-radius:9px;background:#fafafa;"></div>
<svg style="position:absolute;left:2038px;top:1552px;" width="30" height="26" viewBox="0 0 30 26"><circle cx="4.5" cy="13" r="3.4" stroke="#52525b" stroke-width="2.7" fill="none"/><circle cx="23.3" cy="5.3" r="3.4" stroke="#52525b" stroke-width="2.7" fill="none"/><circle cx="23.3" cy="20.6" r="3.4" stroke="#52525b" stroke-width="2.7" fill="none"/><path d="M7.8 13 H14 M20 5.3 H16.6 C15 5.3 14 6.3 14 7.9 V18 C14 19.6 15 20.6 16.6 20.6 H20" stroke="#52525b" stroke-width="2.7" fill="none"/></svg>
<div class="t" style="left:2103.50px;top:1551.99px;font-size:26px;color:#18181b;letter-spacing:0.465px;">Default Sales Channel</div>
<div class="t" style="left:2023.60px;top:1632.69px;font-size:26px;color:#52525b;letter-spacing:0.405px;">Available in <span style="color:#18181b;font-size:28px;-webkit-text-stroke:0.4px currentColor;">1</span> of <span style="color:#18181b;font-size:28px;-webkit-text-stroke:0.4px currentColor;">1</span> sales channels</div>
<div style="position:absolute;left:1974px;top:1720px;width:884px;height:200px;box-sizing:border-box;border:2px solid #e4e4e7;border-radius:18px;background:#fff;"></div>
<div class="t" style="left:2023.60px;top:1764.51px;font-size:32px;color:#18181b;letter-spacing:1.346px;-webkit-text-stroke:0.35px currentColor;">Shipping configuration</div>
<div style="position:absolute;left:2766.5px;top:1778.5px;width:5px;height:5px;border-radius:50%;background:#3f3f46;"></div>
<div style="position:absolute;left:2777.0px;top:1778.5px;width:5px;height:5px;border-radius:50%;background:#3f3f46;"></div>
<div style="position:absolute;left:2787.5px;top:1778.5px;width:5px;height:5px;border-radius:50%;background:#3f3f46;"></div>
</div>
</body></html>
